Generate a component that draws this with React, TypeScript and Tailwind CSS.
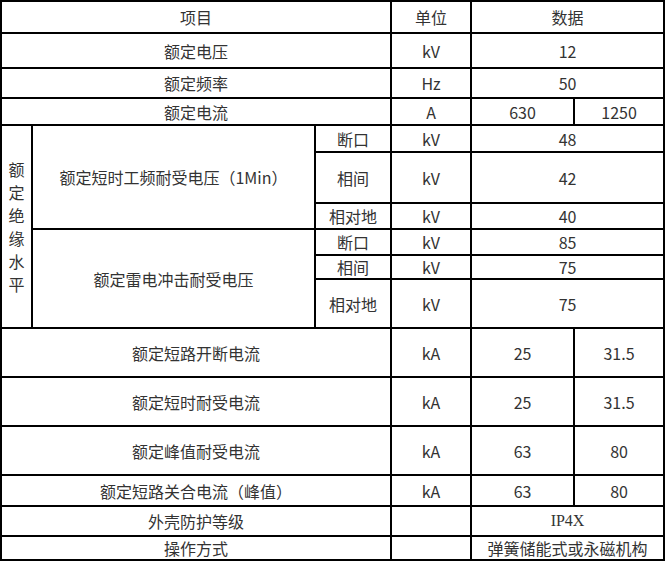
const cell = "border-2 border-black p-0 text-center align-middle font-normal leading-[20px]";

export default function App() {
  return (
    <div
      className="bg-white w-[668px] h-[563px] text-[16px] text-[#333]"
      style={{ fontFamily: '"Noto Sans CJK SC", "Noto Sans", sans-serif' }}
    >
      <table className="w-[663px] table-fixed border-collapse">
        <colgroup>
          <col className="w-[31px]" />
          <col className="w-[283px]" />
          <col className="w-[76px]" />
          <col className="w-[80px]" />
          <col className="w-[103px]" />
          <col className="w-[90px]" />
        </colgroup>
        <tbody>
          <tr className="h-[32px]">
            <td colSpan={3} className={cell}>项目</td>
            <td className={cell}>单位</td>
            <td colSpan={2} className={cell}>数据</td>
          </tr>
          <tr className="h-[35px]">
            <td colSpan={3} className={cell}>额定电压</td>
            <td className={cell}>kV</td>
            <td colSpan={2} className={cell}>12</td>
          </tr>
          <tr className="h-[30px]">
            <td colSpan={3} className={cell}>额定频率</td>
            <td className={cell}>Hz</td>
            <td colSpan={2} className={cell}>50</td>
          </tr>
          <tr className="h-[27px]">
            <td colSpan={3} className={cell}>额定电流</td>
            <td className={cell}>A</td>
            <td className={cell}>630</td>
            <td className={cell}>1250</td>
          </tr>

          {/* 额定绝缘水平 */}
          <tr className="h-[27px]">
            <td rowSpan={6} className={cell}>
              <div className="flex flex-col items-center leading-[23px]">
                {"额定绝缘水平".split("").map((c, i) => (
                  <span key={i}>{c}</span>
                ))}
              </div>
            </td>
            <td rowSpan={3} className={cell}>额定短时工频耐受电压（1Min）</td>
            <td className={cell}>断口</td>
            <td className={cell}>kV</td>
            <td colSpan={2} className={cell}>48</td>
          </tr>
          <tr className="h-[51px]">
            <td className={cell}>相间</td>
            <td className={cell}>kV</td>
            <td colSpan={2} className={cell}>42</td>
          </tr>
          <tr className="h-[26px]">
            <td className={cell}>相对地</td>
            <td className={cell}>kV</td>
            <td colSpan={2} className={cell}>40</td>
          </tr>
          <tr className="h-[26px]">
            <td rowSpan={3} className={cell}>额定雷电冲击耐受电压</td>
            <td className={cell}>断口</td>
            <td className={cell}>kV</td>
            <td colSpan={2} className={cell}>85</td>
          </tr>
          <tr className="h-[24px]">
            <td className={cell}>相间</td>
            <td className={cell}>kV</td>
            <td colSpan={2} className={cell}>75</td>
          </tr>
          <tr className="h-[49px]">
            <td className={cell}>相对地</td>
            <td className={cell}>kV</td>
            <td colSpan={2} className={cell}>75</td>
          </tr>

          <tr className="h-[49px]">
            <td colSpan={3} className={cell}>额定短路开断电流</td>
            <td className={cell}>kA</td>
            <td className={cell}>25</td>
            <td className={cell}>31.5</td>
          </tr>
          <tr className="h-[49px]">
            <td colSpan={3} className={cell}>额定短时耐受电流</td>
            <td className={cell}>kA</td>
            <td className={cell}>25</td>
            <td className={cell}>31.5</td>
          </tr>
          <tr className="h-[49px]">
            <td colSpan={3} className={cell}>额定峰值耐受电流</td>
            <td className={cell}>kA</td>
            <td className={cell}>63</td>
            <td className={cell}>80</td>
          </tr>
          <tr className="h-[31px]">
            <td colSpan={3} className={cell}>额定短路关合电流（峰值）</td>
            <td className={cell}>kA</td>
            <td className={cell}>63</td>
            <td className={cell}>80</td>
          </tr>
          <tr className="h-[30px]">
            <td colSpan={3} className={cell}>外壳防护等级</td>
            <td className={cell}></td>
            <td colSpan={2} className={cell} style={{ fontFamily: '"Liberation Serif", serif' }}>
              IP4X
            </td>
          </tr>
          <tr className="h-[24px]">
            <td colSpan={3} className={cell}>操作方式</td>
            <td className={cell}></td>
            <td colSpan={2} className={cell}>弹簧储能式或永磁机构</td>
          </tr>
        </tbody>
      </table>
    </div>
  );
}
